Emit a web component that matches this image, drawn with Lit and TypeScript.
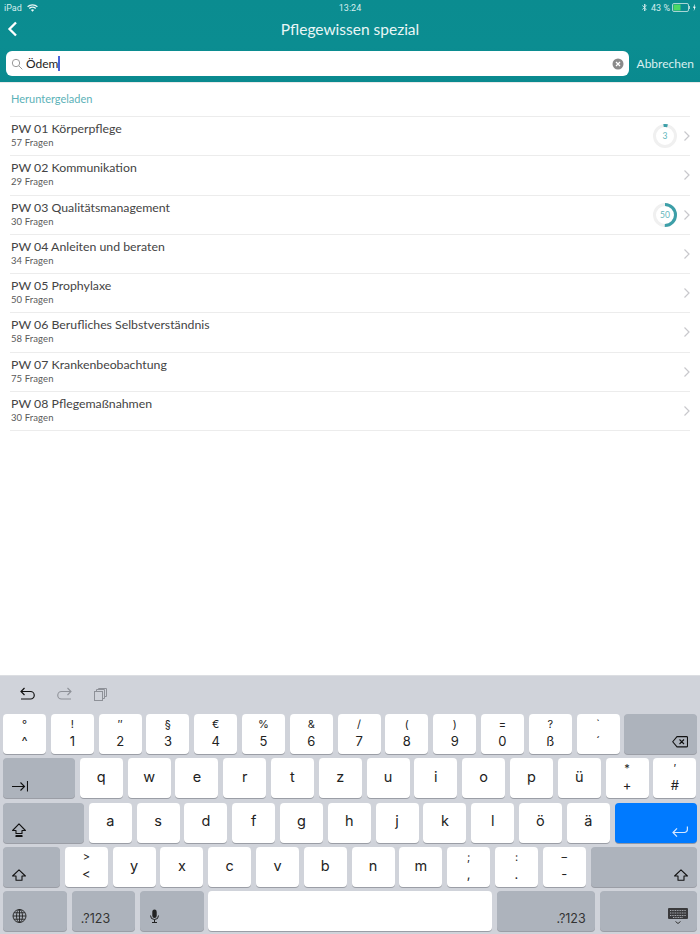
import { LitElement, html, css, svg } from "lit";
import { customElement } from "lit/decorators.js";

const ROWS = [
  ["PW 01 Körperpflege", "57 Fragen", 3],
  ["PW 02 Kommunikation", "29 Fragen", null],
  ["PW 03 Qualitätsmanagement", "30 Fragen", 50],
  ["PW 04 Anleiten und beraten", "34 Fragen", null],
  ["PW 05 Prophylaxe", "50 Fragen", null],
  ["PW 06 Berufliches Selbstverständnis", "58 Fragen", null],
  ["PW 07 Krankenbeobachtung", "75 Fragen", null],
  ["PW 08 Pflegemaßnahmen", "30 Fragen", null],
] as const;

const ic = {
  tab: svg`<path d="M0 5.500h12.500M8.500 1.500l4 4-4 4M15.500 0v10.500" fill="none" stroke="#111" stroke-width="1.100"/>`,
  caps: svg`<path d="M7 .8l6.400 6.700H10v3H4v-3H.6zM4 12.600h6v1.100H4z" fill="none" stroke="#111" stroke-width="1.100" stroke-linejoin="round"/>`,
  shift: svg`<path d="M7 .8l6.400 6.200H10v4.200H4V7H.6z" fill="none" stroke="#111" stroke-width="1.100" stroke-linejoin="round"/>`,
  del: svg`<path d="M5 .6h9.500a1 1 0 0 1 1 1v8.300a1 1 0 0 1-1 1H5L.7 5.750zM7.500 3.500l4.500 4.500M12 3.500L7.500 8" fill="none" stroke="#111" stroke-width="1.100" stroke-linejoin="round"/>`,
  ret: svg`<path d="M15.400 .5v3a3 3 0 0 1-3 3H1M5 2.300L1 6.500l4 4.100" fill="none" stroke="#d6e8ff" stroke-width="1.200"/>`,
  globe: svg`<g fill="none" stroke="#222" stroke-width=".9"><circle cx="7.500" cy="7" r="6.500"/><ellipse cx="7.500" cy="7" rx="3" ry="6.500"/><path d="M7.500 .5v13M1 7h13M2 3.800h11M2 10.200h11"/></g>`,
  mic: svg`<g fill="none" stroke="#222" stroke-width="1"><path d="M1.500 6.500a4 4 0 0 0 8 0M5.500 10.500v3M3 13.500h5"/></g><rect x="3.300" y=".5" width="4.400" height="8.500" rx="2.200" fill="#222"/>`,
  kbd: svg`<rect x="0" y="0" width="20" height="11" rx="1" fill="#3a3a3c"/><path d="M2 2.500h16M2 5h16M2 7.500h16M5 9.500h10" stroke="#c8ccd2" stroke-width=".8" stroke-dasharray="1 .7"/><path d="M7.500 13.500l2.500 2 2.500-2" fill="none" stroke="#333" stroke-width="1"/>`,
};

type K = string | [string, string];
const R1: K[] = [["°", "^"], ["!", "1"], ["″", "2"], ["§", "3"], ["€", "4"], ["%", "5"], ["&", "6"], ["/", "7"], ["(", "8"], [")", "9"], ["=", "0"], ["?", "ß"], ["`", "´"]];
const R2: K[] = ["q", "w", "e", "r", "t", "z", "u", "i", "o", "p", "ü", ["*", "+"], ["′", "#"]];
const R3: K[] = ["a", "s", "d", "f", "g", "h", "j", "k", "l", "ö", "ä"];
const R4: K[] = [[">", "<"], "y", "x", "c", "v", "b", "n", "m", [";", ","], [":", "."], ["–", "-"]];

@customElement("app-root")
export class AppRoot extends LitElement {
  static styles = css`
    :host {
      display: flex;
      flex-direction: column;
      height: 934px;
      overflow: hidden;
      background: #fff;
      font-family: "Lato", "Liberation Sans", sans-serif;
    }
    .head {
      height: 82px;
      flex: none;
      background: linear-gradient(180deg, #0b8c90 0%, #0b8d91 55%, #0a8a8f 100%);
      color: #fff;
      display: flex;
      flex-direction: column;
      box-sizing: border-box;
    }
    .status {
      height: 15px;
      flex: none;
      display: flex;
      align-items: center;
      padding: 0 4px 0 4px;
      font: 9px "Roboto", sans-serif;
      color: #d5eeee;
      position: relative;
    }
    .status .time { position: absolute; left: 0; right: 0; text-align: center; }
    .status .sp { flex: 1; }
    .status svg { display: block; }
    .wifi { margin-left: 5px; }
    .pct { margin-left: 4px; }
    .batt { margin-left: 2px; }
    .nav {
      height: 36px;
      flex: none;
      box-sizing: border-box;
      padding-bottom: 9px;
      display: flex;
      align-items: center;
      justify-content: center;
      font-size: 15.500px;
      position: relative;
      color: #e9f6f6;
    }
    .back { position: absolute; left: 7px; top: 6px; }
    .search {
      display: flex;
      align-items: center;
      padding: 0 6px;
      height: 25px;
      gap: 8px;
    }
    .field {
      flex: 1;
      height: 25px;
      background: #fff;
      border-radius: 6px;
      display: flex;
      align-items: center;
      padding: 0 5px;
      color: #222;
      font-size: 12px;
    }
    .field .q { margin-right: 3px; flex: none; }
    .caret { width: 1.500px; height: 15px; background: #4a63d8; }
    .field .sp { flex: 1; }
    .cancel { font-size: 12px; color: #d9f0f0; }
    .list {
      flex: 1;
      padding: 0 10px;
      color: #444;
      border-top: 1px solid #e9e9e9;
    }
    .section {
      height: 33px;
      box-sizing: border-box;
      padding: 9px 1px 0;
      font-size: 11px;
      color: #5cb2b8;
    }
    .row {
      height: 39.250px;
      box-sizing: border-box;
      border-top: 1px solid #ececec;
      display: flex;
      align-items: center;
      padding: 0 0 0 1px;
    }
    .row:last-child { border-bottom: 1px solid #ececec; height: 40.250px; }
    .txt { flex: 1; margin-top: -1px; }
    .t { font-size: 12.300px; line-height: 15px; }
    .s { font-size: 9.500px; line-height: 14px; color: #5a5a5a; letter-spacing: 0.1px; }
    .ring { flex: none; margin-right: 5px; }
    .ring text { font: 8.500px "Lato", sans-serif; fill: #62b6bb; text-anchor: middle; }
    .chev { flex: none; }
    .kb {
      flex: none;
      height: 259px;
      box-sizing: border-box;
      background: #d0d3da;
      border-top: 1px solid #dcdee2;
      display: flex;
      flex-direction: column;
      font-family: "Inter", "Roboto", sans-serif;
      color: #222;
    }
    .tools {
      height: 38px;
      flex: none;
      box-sizing: border-box;
      padding: 0 0 2px 20px;
      display: flex;
      align-items: center;
      gap: 22px;
    }
    .keys {
      display: flex;
      flex-direction: column;
      gap: 4.300px;
      padding: 0 3px;
    }
    .r { display: flex; gap: 4.800px; height: 40px; }
    .k {
      width: 43px;
      flex: none;
      background: #fff;
      border-radius: 4px;
      box-shadow: 0 1px 0 #9b9ea6;
      display: flex;
      align-items: center;
      justify-content: center;
      font-size: 14.500px;
      line-height: 1;
      padding-bottom: 2px;
      box-sizing: border-box;
    }
    .k.two {
      flex-direction: column;
      justify-content: center;
      gap: 5px;
      font-size: 11px;
      padding-bottom: 1px;
    }
    .k.two span:last-child { font-size: 13px; }
    .k.g { background: #adb3bc; align-items: flex-end; padding: 0 9px 6px; }
    .k.end { justify-content: flex-end; }
    .k.start { justify-content: flex-start; }
    .k.blue { background: #007aff; box-shadow: 0 1px 0 #8e98a8; }
    .k.txtk { font-size: 12.500px; color: #333; }
    .w72 { width: 72px; }
    .w81 { width: 81px; }
    .w57 { width: 57px; }
    .w64 { width: 64px; }
    .w63 { width: 63.500px; }
    .w98 { width: 97.500px; }
    .fill, .space { flex: 1; width: auto; }
  `;

  private key(k: K) {
    return Array.isArray(k)
      ? html`<div class="k two"><span>${k[0]}</span><span>${k[1]}</span></div>`
      : html`<div class="k">${k}</div>`;
  }

  private icon(w: number, h: number, body: unknown) {
    return html`<svg width=${w} height=${h} viewBox="0 0 ${w} ${h}">${body}</svg>`;
  }

  private ring(v: number) {
    const r = 10.500;
    const c = 2 * Math.PI * r;
    const arc = Math.max((c * v) / 100, 4);
    const start = v < 10 ? -98 : -90;
    return html`<svg class="ring" width="24" height="24" viewBox="0 0 24 24">
      <circle cx="12" cy="12" r=${r} fill="none" stroke="#f0f0f0" stroke-width="3"></circle>
      <circle cx="12" cy="12" r=${r} fill="none" stroke="#3d9fa8" stroke-width="3"
        stroke-dasharray="${arc} ${c}" transform="rotate(${start} 12 12)"></circle>
      <text x="12" y="15">${v}</text>
    </svg>`;
  }

  render() {
    return html`
      <div class="head">
        <div class="status">
          <span>iPad</span>
          <svg class="wifi" width="11" height="8" viewBox="0 0 11 8"><g fill="none" stroke="#eaf6f6" stroke-width="1.300"><path d="M.6 2.800a7 7 0 0 1 9.800 0M2.300 4.500a4.600 4.600 0 0 1 6.400 0"/></g><path d="M3.900 6a2.300 2.300 0 0 1 3.200 0L5.500 7.800z" fill="#eaf6f6"/></svg>
          <span class="time">13:24</span>
          <span class="sp"></span>
          <svg width="5" height="9" viewBox="0 0 5 9"><path d="M.3 2.500l4 3.500L2.500 8V1l1.800 2-4 3.500" fill="none" stroke="#e0f2f2" stroke-width=".8"/></svg>
          <span class="pct">43 %</span>
          <svg class="batt" width="24" height="9" viewBox="0 0 24 9"><rect x=".5" y=".5" width="16" height="8" rx="1.500" fill="none" stroke="#a9d5d5"/><rect x="1.500" y="1.500" width="7" height="6" fill="#4cd964"/><rect x="17" y="3" width="1" height="3" fill="#a9d5d5"/><path d="M23 .8l-2 4h1.200l-.5 3.400 2-4.400h-1.200z" fill="#fff"/></svg>
        </div>
        <div class="nav">
          <svg class="back" width="11" height="16" viewBox="0 0 11 16"><path d="M9 1.500L2.500 8 9 14.500" fill="none" stroke="#fff" stroke-width="2.300"/></svg>
          Pflegewissen spezial
        </div>
        <div class="search">
          <div class="field">
            <svg class="q" width="12" height="12" viewBox="0 0 12 12"><circle cx="5" cy="5" r="3.700" fill="none" stroke="#999" stroke-width="1"/><path d="M7.800 7.800l3.500 3.500" stroke="#999" stroke-width="1"/></svg>
            <span>Ödem</span><span class="caret"></span>
            <span class="sp"></span>
            <svg width="12" height="12" viewBox="0 0 12 12"><circle cx="6" cy="6" r="5.500" fill="#8a8a8a"/><path d="M4 4l4 4M8 4l-4 4" stroke="#fff" stroke-width="1.300"/></svg>
          </div>
          <span class="cancel">Abbrechen</span>
        </div>
      </div>
      <div class="list">
        <div class="section">Heruntergeladen</div>
        ${ROWS.map(
          ([t, s, v]) => html`<div class="row">
            <div class="txt"><div class="t">${t}</div><div class="s">${s}</div></div>
            ${v !== null ? this.ring(v) : ""}
            <svg class="chev" width="8" height="12" viewBox="0 0 8 12"><path d="M2.500 1.500L7 6l-4.500 4.500" fill="none" stroke="#c8c8cc" stroke-width="1.200"/></svg>
          </div>`
        )}
      </div>
      <div class="kb">
        <div class="tools">
          <svg width="15" height="15" viewBox="0 0 15 15"><path d="M4.500 1L1 4.500 4.500 8M1 4.500h9.500a3.700 3.700 0 0 1 0 7.500H1" fill="none" stroke="#111" stroke-width="1.200"/></svg>
          <svg width="15" height="15" viewBox="0 0 15 15"><path d="M10.500 1L14 4.500 10.500 8M14 4.500H4.500a3.700 3.700 0 0 0 0 7.500H14" fill="none" stroke="#8e9198" stroke-width="1.100"/></svg>
          <svg width="13" height="13" viewBox="0 0 13 13"><g fill="none" stroke="#8e9198" stroke-width="1"><rect x=".5" y="3.500" width="8" height="9"/><path d="M2.500 3.500v-2h8v9h-2M4.500 1.500V.5h8v8h-2"/></g></svg>
        </div>
        <div class="keys">
          <div class="r">${R1.map((k) => this.key(k))}<div class="k g fill end">${this.icon(16, 12, ic.del)}</div></div>
          <div class="r"><div class="k g w72 start">${this.icon(16, 11, ic.tab)}</div>${R2.map((k) => this.key(k))}</div>
          <div class="r"><div class="k g w81 start">${this.icon(14, 14, ic.caps)}</div>${R3.map((k) => this.key(k))}<div class="k g blue fill end">${this.icon(16, 11, ic.ret)}</div></div>
          <div class="r"><div class="k g w57 start">${this.icon(14, 12, ic.shift)}</div>${R4.map((k) => this.key(k))}<div class="k g fill end">${this.icon(14, 12, ic.shift)}</div></div>
          <div class="r">
            <div class="k g w64 start">${this.icon(15, 16, ic.globe)}</div>
            <div class="k g w63 start txtk">.?123</div>
            <div class="k g w63 start">${this.icon(11, 16, ic.mic)}</div>
            <div class="k space"></div>
            <div class="k g w98 end txtk">.?123</div>
            <div class="k g w98 end">${this.icon(20, 17, ic.kbd)}</div>
          </div>
        </div>
      </div>
    `;
  }
}
